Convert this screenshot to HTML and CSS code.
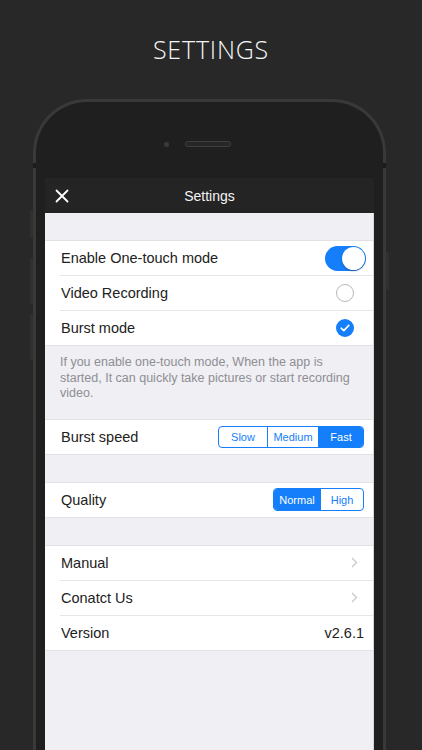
FILE: index.html
```html
<!DOCTYPE html>
<html>
<head>
<meta charset="utf-8">
<link rel="stylesheet" href="styles.css">
</head>
<body>
<div class="page">
  <h1 class="title">SETTINGS</h1>
  <div class="phone">
    <span class="btn btn-l1"></span>
    <span class="btn btn-l2"></span>
    <span class="btn btn-l3"></span>
    <span class="btn btn-r1"></span>
    <span class="antenna antenna-l"></span>
    <span class="antenna antenna-r"></span>
    <div class="earpiece">
      <span class="camera"></span>
      <span class="speaker"></span>
    </div>
    <div class="screen">
      <div class="navbar">
        <svg class="close" width="14" height="14" viewBox="0 0 14 14"><path d="M1.5 1.5 L12.5 12.5 M12.5 1.5 L1.5 12.5" stroke="#fff" stroke-width="1.8" stroke-linecap="round"/></svg>
        <span class="nav-title">Settings</span>
      </div>
      <div class="content">
        <div class="spacer"></div>
        <div class="group">
          <div class="row">
            <span class="label">Enable One-touch mode</span>
            <span class="toggle"><span class="knob"></span></span>
          </div>
          <div class="row">
            <span class="label">Video Recording</span>
            <span class="radio"></span>
          </div>
          <div class="row">
            <span class="label">Burst mode</span>
            <span class="radio checked"><svg width="10" height="8" viewBox="0 0 10 8"><path d="M1.2 4.2 L3.8 6.6 L8.8 1.4" fill="none" stroke="#fff" stroke-width="1.6" stroke-linecap="round" stroke-linejoin="round"/></svg></span>
          </div>
        </div>
        <p class="footer">If you enable one-touch mode, When the app is started, It can quickly take pictures or start recording video.</p>
        <div class="group">
          <div class="row">
            <span class="label">Burst speed</span>
            <div class="seg seg3">
              <span class="seg-item">Slow</span>
              <span class="seg-item">Medium</span>
              <span class="seg-item on">Fast</span>
            </div>
          </div>
        </div>
        <div class="spacer"></div>
        <div class="group">
          <div class="row">
            <span class="label">Quality</span>
            <div class="seg seg2">
              <span class="seg-item on">Normal</span>
              <span class="seg-item">High</span>
            </div>
          </div>
        </div>
        <div class="spacer"></div>
        <div class="group">
          <div class="row">
            <span class="label">Manual</span>
            <svg class="chev" width="7" height="11" viewBox="0 0 7 11"><path d="M1 1 L5.5 5.5 L1 10" fill="none" stroke="#c7c7cc" stroke-width="1.3"/></svg>
          </div>
          <div class="row">
            <span class="label">Conatct Us</span>
            <svg class="chev" width="7" height="11" viewBox="0 0 7 11"><path d="M1 1 L5.5 5.5 L1 10" fill="none" stroke="#c7c7cc" stroke-width="1.3"/></svg>
          </div>
          <div class="row">
            <span class="label">Version</span>
            <span class="value">v2.6.1</span>
          </div>
        </div>
      </div>
    </div>
  </div>
</div>
</body>
</html>
```

FILE: styles.css
```css
html, body {
  margin: 0;
  padding: 0;
  background: #282828;
  height: 100%;
  overflow: hidden;
}
.page {
  width: 422px;
  height: 750px;
  overflow: hidden;
  display: flex;
  flex-direction: column;
  align-items: center;
}
.title {
  margin: 33px 0 0 0;
  height: 32px;
  font-family: "Open Sans", sans-serif;
  font-weight: 300;
  font-size: 25px;
  line-height: 32px;
  letter-spacing: 0.8px;
  color: #f6f6f6;
}
.phone {
  position: relative;
  margin-top: 34px;
  margin-left: -3px;
  width: 347px;
  height: 800px;
  flex-shrink: 0;
  border: 3px solid #393939;
  border-bottom: none;
  border-radius: 54px 54px 0 0;
  background: #1f1f1f;
  display: flex;
  flex-direction: column;
  align-items: center;
}
.btn {
  position: absolute;
  width: 3px;
  background: #303030;
  border-radius: 1px;
}
.btn-l1 { left: -6px; top: 108px; height: 28px; }
.btn-l2 { left: -6px; top: 156px; height: 46px; }
.btn-l3 { left: -6px; top: 212px; height: 46px; }
.btn-r1 { right: -6px; top: 150px; height: 38px; }
.antenna {
  position: absolute;
  top: 61px;
  width: 3px;
  height: 5px;
  background: #1b1b1b;
}
.antenna-l { left: -3px; }
.antenna-r { right: -3px; }
.earpiece {
  margin-top: 38px;
  height: 8px;
  display: flex;
  align-items: center;
  gap: 16px;
  margin-left: -24px;
}
.camera {
  width: 5px;
  height: 5px;
  border-radius: 50%;
  background: #3a3a3a;
}
.speaker {
  width: 44px;
  height: 4px;
  border: 1px solid #3e3e3e;
  border-radius: 4px;
  background: #262626;
}
.screen {
  margin-top: 30px;
  width: 329px;
  flex: 1;
  display: flex;
  flex-direction: column;
  font-family: "Liberation Sans", Arial, sans-serif;
}
.navbar {
  height: 35px;
  background: #242424;
  display: flex;
  align-items: center;
  justify-content: center;
  position: relative;
}
.close {
  position: absolute;
  left: 10px;
  top: 11px;
}
.nav-title {
  color: #f4f4f4;
  font-size: 14px;
}
.content {
  flex: 1;
  background: #efeff4;
  border-right: 1px solid #d6d6da;
}
.spacer {
  height: 27px;
}
.group {
  background: #fff;
  border-top: 1px solid #e2e2e6;
  border-bottom: 1px solid #e2e2e6;
}
.row {
  height: 34px;
  margin-left: 15px;
  padding-right: 9px;
  display: flex;
  align-items: center;
  justify-content: space-between;
  border-bottom: 1px solid #e6e6e9;
}
.row:last-child {
  border-bottom: none;
  height: 34px;
}
.label {
  font-size: 14.5px;
  color: #222;
  padding-left: 1px;
}
.value {
  font-size: 14.5px;
  color: #222;
}
.toggle {
  width: 41px;
  height: 25px;
  border-radius: 13px;
  background: #147efb;
  display: flex;
  align-items: center;
  justify-content: flex-end;
  padding-right: 1px;
  box-sizing: border-box;
  margin-right: -2px;
}
.knob {
  width: 23px;
  height: 23px;
  border-radius: 50%;
  background: #fff;
  box-shadow: 0 1px 2px rgba(0,0,0,0.3);
}
.radio {
  width: 18px;
  height: 18px;
  border-radius: 50%;
  border: 1px solid #b8b8bc;
  box-sizing: border-box;
  margin-right: 10px;
  display: flex;
  align-items: center;
  justify-content: center;
}
.radio.checked {
  border: none;
  background: #147efb;
}
.footer {
  margin: 0;
  padding: 9px 15px 17px 15px;
  font-size: 12.5px;
  line-height: 15.5px;
  color: #8e8e93;
}
.seg {
  display: flex;
  height: 22px;
  border: 1px solid #147efb;
  border-radius: 4px;
  box-sizing: border-box;
  overflow: hidden;
}
.seg-item {
  display: flex;
  align-items: center;
  justify-content: center;
  font-size: 11px;
  color: #147efb;
  border-left: 1px solid #147efb;
}
.seg-item:first-child { border-left: none; }
.seg-item.on {
  background: #147efb;
  color: #fff;
}
.seg3 { width: 146px; }
.seg3 .seg-item:nth-child(1) { width: 48px; }
.seg3 .seg-item:nth-child(2) { width: 50px; }
.seg3 .seg-item:nth-child(3) { flex: 1; }
.seg2 { width: 91px; height: 23px; }
.seg2 .seg-item:nth-child(1) { width: 46px; }
.seg2 .seg-item:nth-child(2) { flex: 1; }
.chev {
  margin-right: 6px;
}
```
